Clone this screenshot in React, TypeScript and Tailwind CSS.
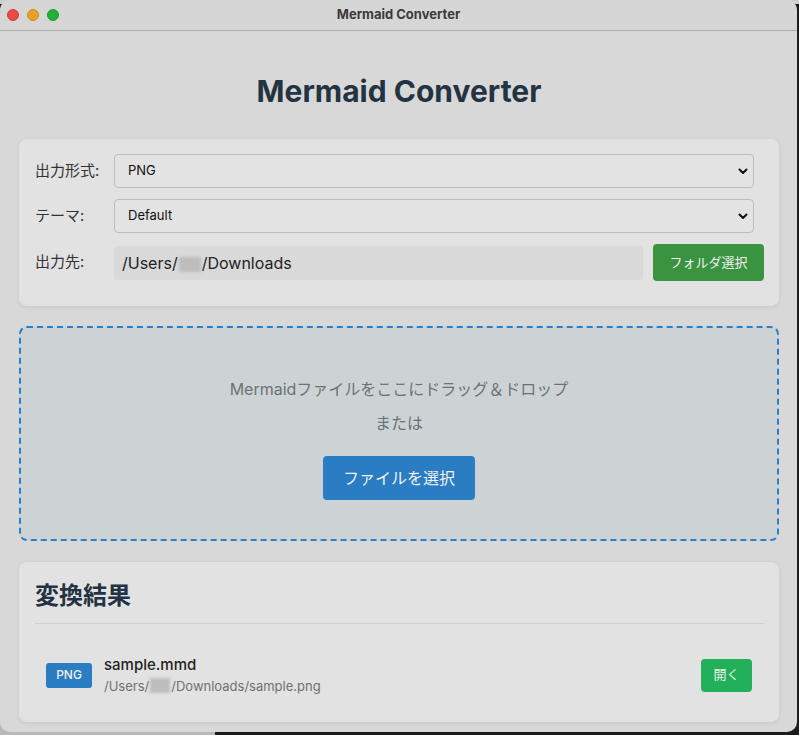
const font = "font-['Inter','Noto_Sans_CJK_JP',sans-serif]";

function Blur({ w = 22 }: { w?: number }) {
  return (
    <span
      className="mx-[1px] inline-block h-[15px] translate-y-[2px] bg-[#bdbdbd] blur-[1.5px]"
      style={{ width: w }}
    />
  );
}

function Chevron() {
  return (
    <svg
      className="pointer-events-none absolute right-[6px] top-1/2 -translate-y-1/2"
      width="10"
      height="8"
      viewBox="0 0 10 8"
    >
      <path d="M1.5 2.5 5 6 8.5 2.5" fill="none" stroke="#111" strokeWidth="2" strokeLinecap="round" strokeLinejoin="round" />
    </svg>
  );
}

function Select({ value }: { value: string }) {
  return (
    <div className="relative mr-[10px] flex-1">
      <div className="flex h-[34px] items-center rounded-[4px] border border-[#bdbdbd] bg-[#e3e3e3] pl-[13px] text-[13px] text-[#111]">
        {value}
      </div>
      <Chevron />
    </div>
  );
}

export default function App() {
  return (
    <div className={`relative h-[735px] w-[799px] overflow-hidden bg-[#1c1c1e] ${font}`}>
      <div className="absolute left-0 top-[700px] h-[35px] w-[215px] bg-[#b9b9b9]" />
      <div className="absolute left-0 top-0 h-[4px] w-[799px] bg-[#cfcfcf]" />
      <div className="relative flex h-[732px] w-[797px] flex-col overflow-hidden rounded-[10px] bg-[#d8d8d8]">
        {/* title bar */}
        <div className="relative flex h-[31px] shrink-0 items-center border-b border-[#a9a9a9] bg-[#d6d6d6]">
          <div className="flex items-center gap-[8px] pl-[7px]">
            <span className="h-[12px] w-[12px] rounded-full border border-[#d33b33] bg-[#ec4a42]" />
            <span className="h-[12px] w-[12px] rounded-full border border-[#d08d1c] bg-[#e8a228]" />
            <span className="h-[12px] w-[12px] rounded-full border border-[#1b9a2f] bg-[#22ae3a]" />
          </div>
          <div className="absolute inset-0 flex items-center justify-center text-[13px] font-bold text-[#3b3b3b]">
            Mermaid Converter
          </div>
        </div>

        <div className="flex flex-col px-[19px] pr-[18px]">
          <h1 className="mt-[42px] text-center text-[30px] font-bold leading-[36px] text-[#243342]">
            Mermaid Converter
          </h1>

          {/* settings card */}
          <div className="mt-[30px] flex flex-col gap-[11px] rounded-[8px] bg-[#e2e2e2] pb-[25px] pl-[16px] pr-[15px] pt-[15px] shadow-[0_1px_4px_rgba(0,0,0,0.08)]">
            <div className="flex items-center">
              <span className="w-[79px] text-[15px] text-[#333]">出力形式:</span>
              <Select value="PNG" />
            </div>
            <div className="flex items-center">
              <span className="w-[79px] text-[15px] text-[#333]">テーマ:</span>
              <Select value="Default" />
            </div>
            <div className="flex items-center">
              <span className="w-[79px] text-[15px] text-[#333]">出力先:</span>
              <div className="flex h-[34px] flex-1 items-center rounded-[4px] bg-[#d9d9d9] pl-[8px] text-[16px] text-[#222]">
                /Users/<Blur />/Downloads
              </div>
              <button className="ml-[10px] h-[37px] w-[111px] rounded-[4px] bg-[#3a933f] text-[13px] text-[#f1f1f1]">
                フォルダ選択
              </button>
            </div>
          </div>

          {/* drop zone */}
          <div className="mt-[20px] flex h-[215px] flex-col items-center rounded-[8px] border-2 border-dashed border-[#2a80c8] bg-[#cdd3d4] pt-[49px]">
            <p className="text-[16px] leading-[24px] text-[#6a7373]">
              Mermaidファイルをここにドラッグ＆ドロップ
            </p>
            <p className="mt-[10px] text-[16px] leading-[24px] text-[#6a7373]">または</p>
            <button className="mt-[21px] h-[44px] w-[152px] rounded-[4px] bg-[#2a7dc2] text-[16px] text-[#f1f1f1]">
              ファイルを選択
            </button>
          </div>

          {/* results */}
          <div className="mt-[21px] flex flex-col rounded-[8px] bg-[#e2e2e2] px-[16px] pr-[15px] pb-[14px] pt-[18px] shadow-[0_1px_4px_rgba(0,0,0,0.08)]">
            <h2 className="border-b border-[#cfcfcf] pb-[11px] text-[24px] font-bold leading-[32px] text-[#243342]">
              変換結果
            </h2>
            <div className="mt-[18px] flex items-center py-[12px] pl-[11px] pr-[12px]">
              <span className="flex h-[25px] w-[46px] items-center justify-center rounded-[3px] bg-[#2a7dc2] text-[12px] font-medium text-[#f1f1f1]">
                PNG
              </span>
              <div className="ml-[12px] flex flex-1 flex-col">
                <span className="text-[15px] font-medium leading-[22px] text-[#222]">sample.mmd</span>
                <span className="text-[13px] leading-[20px] text-[#6a7373]">
                  /Users/<Blur w={20} />/Downloads/sample.png
                </span>
              </div>
              <button className="h-[33px] w-[51px] rounded-[4px] bg-[#23b05a] text-[13px] text-[#f1f1f1]">
                開く
              </button>
            </div>
          </div>
        </div>
      </div>
    </div>
  );
}
